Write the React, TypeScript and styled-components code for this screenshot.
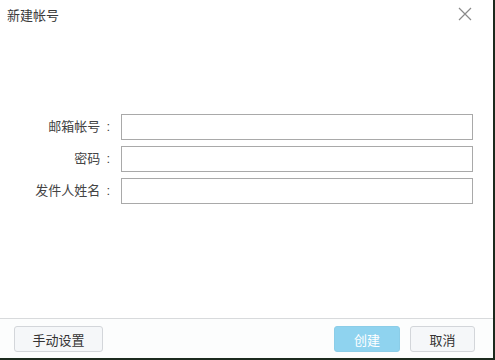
import React from 'react'
import styled, { createGlobalStyle } from 'styled-components'

const GlobalStyle = createGlobalStyle`
  html, body {
    margin: 0;
    padding: 0;
    background: #ffffff;
  }
  body {
    font-family: "Liberation Sans", "Noto Sans CJK SC", sans-serif;
  }
`

const Dialog = styled.div`
  box-sizing: border-box;
  width: 495px;
  height: 360px;
  display: flex;
  flex-direction: column;
  background: #ffffff;
  border-right: 2px solid #1c2a1e;
  border-bottom: 2px solid #1c2a1e;
`

const Header = styled.div`
  display: flex;
  justify-content: space-between;
  align-items: center;
  height: 28px;
  padding: 0 20px 0 7px;
`

const Title = styled.div`
  font-size: 13px;
  color: #3a3a3a;
`

const Close = styled.button`
  width: 16px;
  height: 16px;
  padding: 0;
  border: none;
  background: none;
  display: flex;
  align-items: center;
  justify-content: center;
`

const Body = styled.div`
  flex: 1;
  padding-top: 86px;
`

const Form = styled.div`
  display: grid;
  grid-template-columns: 113px 352px;
  column-gap: 8px;
  row-gap: 6px;
`

const Label = styled.label`
  display: flex;
  justify-content: flex-end;
  font-size: 13px;
  color: #444;
  line-height: 26px;
`

const Colon = styled.span`
  margin: 0 3px 0 6px;
`

const Input = styled.input`
  box-sizing: border-box;
  height: 26px;
  border: 1px solid #a9a9a9;
  background: #fff;
  outline: none;
`

const Footer = styled.div`
  height: 40px;
  border-top: 1px solid #d8dadc;
  background: #fcfdfd;
  display: flex;
  align-items: flex-start;
  padding: 7px 18px 0 14px;
  box-sizing: border-box;
  gap: 10px;
`

const Button = styled.button<{ $primary?: boolean; $w: number }>`
  width: ${p => p.$w}px;
  height: 26px;
  border-radius: 3px;
  font-family: inherit;
  font-size: 13px;
  border: 1px solid ${p => (p.$primary ? '#8bcde8' : '#d3d6da')};
  background: ${p => (p.$primary ? '#8fd3ef' : '#f5f7f9')};
  color: ${p => (p.$primary ? '#ffffff' : '#333')};
  padding: 0;
`

const Spacer = styled.div`
  flex: 1;
`

const fields = ['邮箱帐号', '密码', '发件人姓名']

export default function App() {
  return (
    <>
      <GlobalStyle />
      <Dialog>
        <Header>
          <Title>新建帐号</Title>
          <Close>
            <svg width="14" height="14" viewBox="0 0 14 14">
              <path d="M1 1L13 13M13 1L1 13" stroke="#8a8a8a" strokeWidth="1.2" />
            </svg>
          </Close>
        </Header>
        <Body>
          <Form>
            {fields.map(f => (
              <React.Fragment key={f}>
                <Label>
                  {f}
                  <Colon>:</Colon>
                </Label>
                <Input />
              </React.Fragment>
            ))}
          </Form>
        </Body>
        <Footer>
          <Button $w={89}>手动设置</Button>
          <Spacer />
          <Button $primary $w={66}>创建</Button>
          <Button $w={65}>取消</Button>
        </Footer>
      </Dialog>
    </>
  )
}
